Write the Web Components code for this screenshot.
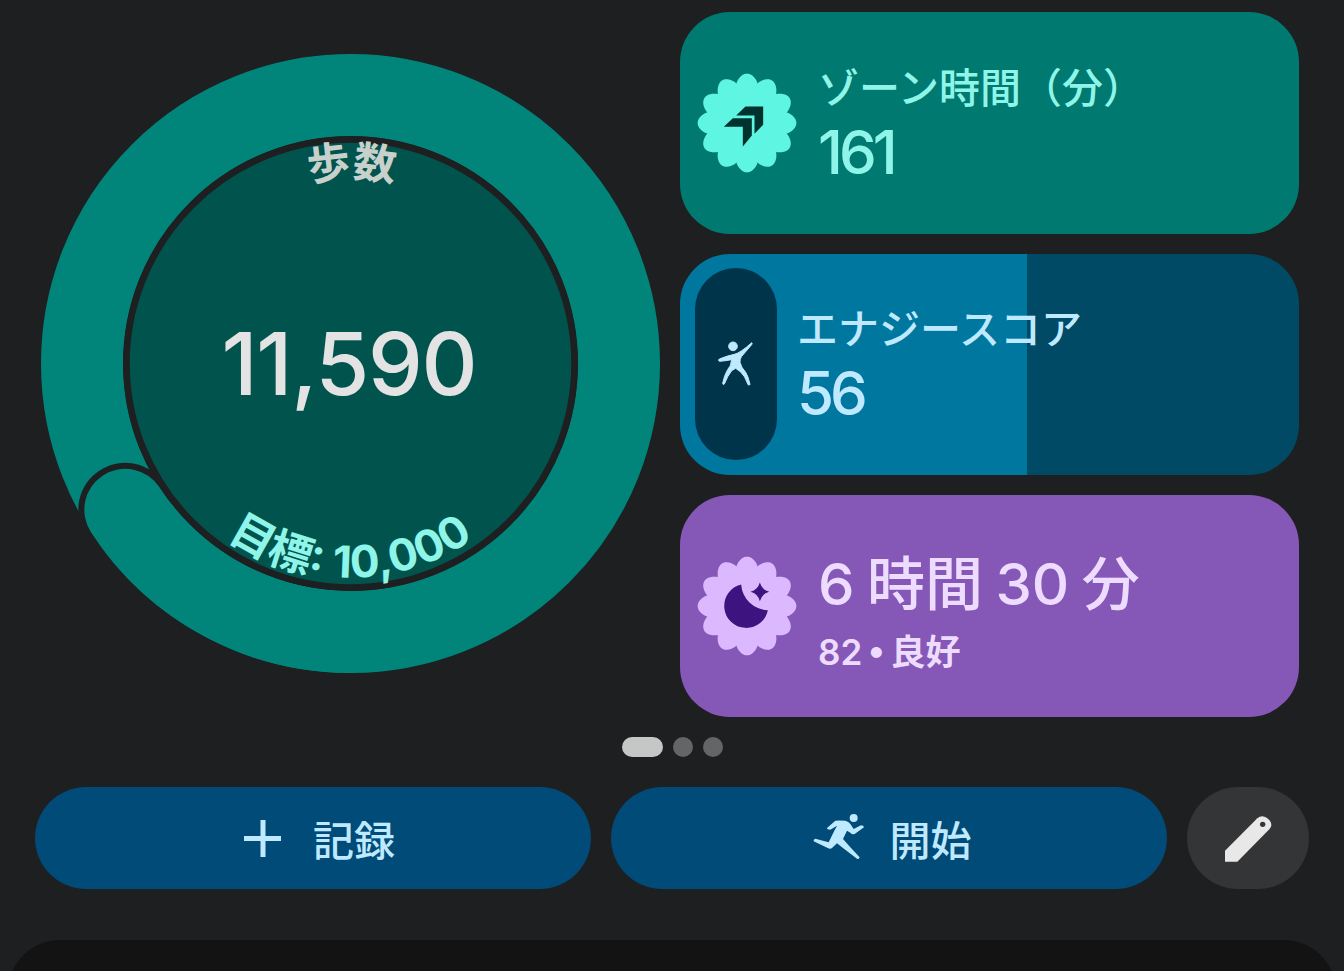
<!DOCTYPE html>
<html lang="ja">
<head>
<meta charset="utf-8">
<title>Fitness</title>
<style>
  html, body {
    margin: 0;
    height: 971px;
    overflow: hidden;
    background: #1e1f21;
    font-family: Inter, "Noto Sans CJK JP", sans-serif;
  }
</style>
</head>
<body>
<app-screen>
  <ring-gauge slot="gauge" label="歩数" goal="目標: 10,000">11,590</ring-gauge>

  <metric-card slot="cards" style="--card:#007a70;--ink:#8ff5e8">
    <flower-icon slot="icon" kind="zone"></flower-icon>
    <span slot="title">ゾーン時間（分）</span>
    <span slot="value">161</span>
  </metric-card>

  <metric-card slot="cards" progress="56" style="--card:#00779f;--rest:#004a66;--ink:#bfe9ff">
    <energy-pill slot="icon"></energy-pill>
    <span slot="title">エナジースコア</span>
    <span slot="value">56</span>
  </metric-card>

  <metric-card slot="cards" variant="sleep" style="--card:#8558b8;--ink:#eedcff">
    <flower-icon slot="icon" kind="sleep"></flower-icon>
    <span slot="title">6 時間 30 分</span>
    <span slot="value">82 • 良好</span>
  </metric-card>

  <page-dots slot="dots"></page-dots>

  <action-button slot="actions" icon="plus">記録</action-button>
  <action-button slot="actions" icon="run">開始</action-button>
  <edit-button slot="actions"></edit-button>

  <bottom-sheet slot="sheet"></bottom-sheet>
</app-screen>

<script>
(function () {
  const appScreenTemplate = document.createElement("template");
  appScreenTemplate.innerHTML = `
  <style>
    :host {
      display: flex;
      flex-direction: column;
      padding-top: 12px;
      box-sizing: border-box;
      height: 971px;
      overflow: hidden;
    }
    .top {
      display: flex;
      align-items: center;
      gap: 20px;
      padding-left: 41px;
      padding-right: 45px;
    }
    .cards {
      display: flex;
      flex-direction: column;
      gap: 20px;
      flex: 1;
    }
    .dots {
      display: flex;
      justify-content: center;
      margin-top: 20px;
    }
    .actions {
      display: flex;
      gap: 20px;
      margin-top: 30px;
      padding: 0 35px;
    }
    .sheet {
      display: block;
      margin-top: 51px;
      padding: 0 8px;
    }
  </style>
  <div class="top">
    <slot name="gauge"></slot>
    <div class="cards"><slot name="cards"></slot></div>
  </div>
  <div class="dots"><slot name="dots"></slot></div>
  <div class="actions"><slot name="actions"></slot></div>
  <div class="sheet"><slot name="sheet"></slot></div>`;

  class AppScreen extends HTMLElement {
    constructor() {
      super();
      this.attachShadow({ mode: "open" }).appendChild(appScreenTemplate.content.cloneNode(true));
    }
  }
  customElements.define("app-screen", AppScreen);

  class RingGauge extends HTMLElement {
    constructor() {
      super();
      const label = this.getAttribute("label") || "";
      const goal = this.getAttribute("goal") || "";
      this.attachShadow({ mode: "open" }).innerHTML = `
      <style>
        :host {
          display: grid;
          place-items: center;
          flex: none;
          width: 619px;
          height: 619px;
          margin-bottom: 2px;
        }
        svg, .value { grid-area: 1 / 1; }
        svg { display: block; }
        .value {
          font-size: 87px;
          font-weight: 500;
          line-height: 1;
          letter-spacing: -1.2px;
          color: #e3e3e3;
          margin-left: -3px;
        }
        text { font-family: Inter, "Noto Sans CJK JP", sans-serif; font-weight: 700; }
      </style>
      <svg width="619" height="619" viewBox="0 0 619 619">
        <circle cx="309.5" cy="309.5" r="268.5" fill="none" stroke="#01857a" stroke-width="82"/>
        <circle cx="84.3" cy="455.8" r="47" fill="#1e1f21"/>
        <path d="M84.3 455.8A268.5 268.5 0 0 0 309.5 578" fill="none" stroke="#01857a" stroke-width="82" stroke-linecap="round"/>
        <circle cx="309.5" cy="309.5" r="224" fill="#00544d" stroke="#1e1f21" stroke-width="6.5"/>
        <path id="top-arc" d="M123.5 309.5A186 186 0 0 1 495.5 309.5" fill="none"/>
        <path id="bottom-arc" d="M95.5 309.5A214 214 0 0 0 523.5 309.5" fill="none"/>
        <text font-size="43" fill="#c8d0cc" text-anchor="middle"><textPath href="#top-arc" startOffset="50.2%">${label}</textPath></text>
        <text font-size="44" fill="#8ff5e8" text-anchor="middle"><textPath href="#bottom-arc" startOffset="50%">${goal}</textPath></text>
      </svg>
      <span class="value"><slot></slot></span>`;
    }
  }
  customElements.define("ring-gauge", RingGauge);

  class MetricCard extends HTMLElement {
    constructor() {
      super();
      const progress = this.getAttribute("progress");
      const sleep = this.getAttribute("variant") === "sleep";
      const background = progress
        ? `linear-gradient(to right, var(--card) ${progress}%, var(--rest) ${progress}%)`
        : "var(--card)";
      this.attachShadow({ mode: "open" }).innerHTML = `
      <style>
        :host {
          display: flex;
          align-items: center;
          height: 221.67px;
          border-radius: 50px;
          background: ${background};
          color: var(--ink);
          padding-left: ${progress ? 15 : 17}px;
          box-sizing: border-box;
        }
        .text {
          display: flex;
          flex-direction: column;
          margin-left: ${progress ? 20 : 21}px;
          padding-top: ${sleep ? 12 : 0}px;
        }
        .title {
          font-size: ${sleep ? 58 : 41}px;
          line-height: ${sleep ? 68 : 56}px;
          font-weight: 500;
          word-spacing: ${sleep ? -3 : 0}px;
          white-space: nowrap;
        }
        .value {
          font-size: ${sleep ? 35 : 60}px;
          line-height: ${sleep ? 44 : 70}px;
          font-weight: ${sleep ? 600 : 500};
          letter-spacing: ${sleep ? 0 : -4}px;
          word-spacing: ${sleep ? -3.5 : 0}px;
          margin-top: ${sleep ? 12 : 1}px;
          margin-bottom: ${sleep ? 0 : -1}px;
          white-space: nowrap;
        }
      </style>
      <slot name="icon"></slot>
      <div class="text">
        <span class="title"><slot name="title"></slot></span>
        <span class="value"><slot name="value"></slot></span>
      </div>`;
    }
  }
  customElements.define("metric-card", MetricCard);

  // scalloped badge outline, twelve petals, artwork drawn on a 345 grid
  const scallop = Array.from({ length: 360 }, (_, i) => {
    const a = (i * Math.PI) / 180;
    const r = 123 + 25 * Math.pow(Math.abs(Math.cos(6 * a)), 0.9);
    return `${(172.5 + r * Math.sin(a)).toFixed(1)} ${(172.5 - r * Math.cos(a)).toFixed(1)}`;
  }).join("L");

  const flowerKinds = {
    zone: {
      fill: "#5ff5e3",
      art: `<path fill="#00332e" d="M140 150L168 123H221V178L195 205V150ZM103 184L130 158H187V210L160 243V184Z"/>`,
    },
    sleep: {
      fill: "#dcb8ff",
      art: `<path fill="#3d1380" d="M155 108A66 66 0 1 0 235 185A82 82 0 0 1 155 108Z"/>
            <path fill="#3d1380" d="M211 102Q217 124 239 130Q217 136 211 158Q205 136 183 130Q205 124 211 102Z"/>`,
    },
  };

  class FlowerIcon extends HTMLElement {
    constructor() {
      super();
      const kind = flowerKinds[this.getAttribute("kind")] || flowerKinds.zone;
      this.attachShadow({ mode: "open" }).innerHTML = `
      <style>
        :host { display: block; width: 100px; height: 100px; flex: none; }
        svg { display: block; }
      </style>
      <svg width="100" height="100" viewBox="22.5 22.5 300 300">
        <path fill="${kind.fill}" d="M${scallop}Z"/>
        ${kind.art}
      </svg>`;
    }
  }
  customElements.define("flower-icon", FlowerIcon);

  class EnergyPill extends HTMLElement {
    constructor() {
      super();
      this.attachShadow({ mode: "open" }).innerHTML = `
      <style>
        :host {
          display: flex;
          align-items: center;
          justify-content: center;
          flex: none;
          width: 82px;
          height: 192px;
          border-radius: 41px;
          background: #00344a;
        }
        svg { display: block; }
      </style>
      <svg width="70" height="70" viewBox="0 0 210 210" fill="#bfe9ff" stroke="#bfe9ff" stroke-width="3" stroke-linejoin="round">
        <circle cx="96" cy="52" r="13"/>
        <path d="M152 41Q155 44 152 47L122 82Q116 90 117 100Q120 115 134 130Q141 140 147 166Q146 170 141 167Q132 140 118 128L104 118L92 125Q80 140 70 165Q66 169 65 163Q72 130 88 110L92 92Q70 96 55 97Q50 93 55 90Q80 80 100 76Q118 72 152 41Z"/>
      </svg>`;
    }
  }
  customElements.define("energy-pill", EnergyPill);

  class PageDots extends HTMLElement {
    constructor() {
      super();
      this.attachShadow({ mode: "open" }).innerHTML = `
      <style>
        :host { display: flex; gap: 10px; height: 20px; }
        i { display: block; width: 20px; height: 20px; border-radius: 10px; background: #646566; }
        i.on { width: 41px; background: #c4c7c5; }
      </style>
      <i class="on"></i><i></i><i></i>`;
    }
  }
  customElements.define("page-dots", PageDots);

  const buttonIcons = {
    plus: `<svg style="margin-right:2px" width="48" height="48" viewBox="0 0 48 48" fill="none" stroke="#bfe9ff" stroke-width="5"><path d="M26 6V43M7 24.5H44"/></svg>`,
    run: `<svg style="margin-right:-2px" width="53" height="47" viewBox="38 50 159 141" fill="#bfe9ff"><circle cx="160" cy="62" r="12"/><path d="M80 92L105 70Q112 69 135 70Q145 72 150 80L160 95L182 84Q190 84 191 90L163 110Q155 112 150 106L140 100L128 125L150 150L178 180Q176 187 170 184L125 150L110 138L95 152Q90 156 82 152L40 132Q38 126 45 124L85 135L102 100L110 85L90 97Q80 97 80 92Z"/></svg>`,
  };

  class ActionButton extends HTMLElement {
    constructor() {
      super();
      const icon = buttonIcons[this.getAttribute("icon")] || "";
      this.attachShadow({ mode: "open" }).innerHTML = `
      <style>
        :host {
          display: flex;
          flex: 1;
          align-items: center;
          justify-content: center;
          gap: 26px;
          height: 102px;
          padding-left: 6px;
          box-sizing: border-box;
          border-radius: 51px;
          background: #004b78;
          color: #bfe9ff;
          font-size: 41px;
          font-weight: 500;
        }
        svg { display: block; }
      </style>
      ${icon}<span><slot></slot></span>`;
    }
  }
  customElements.define("action-button", ActionButton);

  class EditButton extends HTMLElement {
    constructor() {
      super();
      this.attachShadow({ mode: "open" }).innerHTML = `
      <style>
        :host {
          display: flex;
          flex: none;
          align-items: center;
          justify-content: center;
          width: 122px;
          height: 102px;
          border-radius: 51px;
          background: #333537;
        }
        svg { display: block; }
      </style>
      <svg width="60" height="60" viewBox="144 84 180 180">
        <path fill="#e8e8e8" d="M165 245V212L262 115Q275 103 290 113L298 120Q310 134 298 148L202 245Z"/>
        <circle cx="278" cy="133" r="8" fill="#333537"/>
      </svg>`;
    }
  }
  customElements.define("edit-button", EditButton);

  class BottomSheet extends HTMLElement {
    constructor() {
      super();
      this.attachShadow({ mode: "open" }).innerHTML = `
      <style>
        :host {
          display: block;
          height: 200px;
          border-radius: 52px 52px 0 0;
          background: #131314;
        }
      </style>`;
    }
  }
  customElements.define("bottom-sheet", BottomSheet);
})();
</script>
</body>
</html>
